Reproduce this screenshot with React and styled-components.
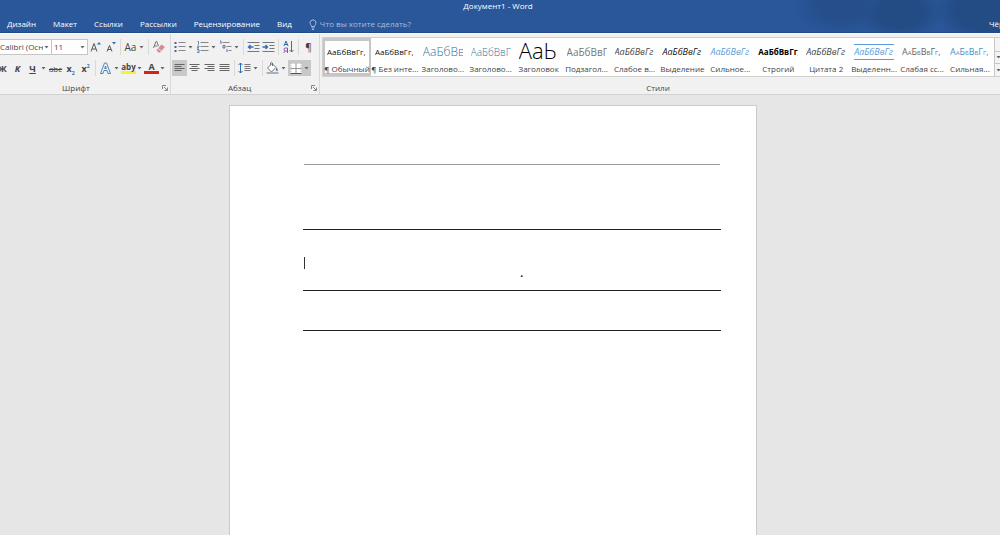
import React, { useState } from "react";
import styled, { createGlobalStyle, css } from "styled-components";

const tabs = ["Дизайн", "Макет", "Ссылки", "Рассылки", "Рецензирование", "Вид"];

const styleItems = [
    { name: "¶ Обычный", sample: "АаБбВвГг,", color: "#111", size: 8 },
    { name: "¶ Без инте...", sample: "АаБбВвГг,", color: "#111", size: 8 },
    { name: "Заголово...", sample: "АаБбВвГ", color: "#2e74a5", size: 12, light: true },
    { name: "Заголово...", sample: "АаБбВвГг", color: "#2e74a5", size: 10, light: true },
    { name: "Заголовок", sample: "АаЬ", color: "#000", size: 22, light: true },
    { name: "Подзагол...", sample: "АаБбВвГ", color: "#777", size: 10 },
    { name: "Слабое в...", sample: "АаБбВвГг", color: "#444", italic: true },
    { name: "Выделение", sample: "АаБбВвГг", color: "#111", italic: true },
    { name: "Сильное...", sample: "АаБбВвГг", color: "#5b9bd5", italic: true },
    { name: "Строгий", sample: "АаБбВвГг,", color: "#000", bold: true, size: 8 },
    { name: "Цитата 2", sample: "АаБбВвГг", color: "#444", italic: true },
    { name: "Выделенн...", sample: "АаБбВвГг", color: "#5b9bd5", italic: true, lined: true },
    { name: "Слабая сс...", sample: "АаБбВвГг,", color: "#666", caps: true },
    { name: "Сильная...", sample: "АаБбВвГг,", color: "#4a90c8", caps: true },
];

const Icon = ({ children }) => (
    <svg width="14" height="14" viewBox="0 0 14 14" fill="none" aria-hidden="true">
        {children}
    </svg>
);

const Arrow = () => (
    <ArrowSvg width="5" height="3" viewBox="0 0 5 3" aria-hidden="true">
        <path d="M0.5 0h4L2.5 2.5z" fill="#666" />
    </ArrowSvg>
);

const Lines = ({ rows }) => (
    <Icon>
        {rows.map(([x, w], i) => (
            <path key={i} d={`M${x} ${3.5 + i * 2}h${w}`} stroke="#666" />
        ))}
    </Icon>
);

const BulletIcon = () => (
    <Icon>
        {[2, 6, 10].map((y) => (
            <React.Fragment key={y}>
                <rect x="2" y={y} width="2" height="2" fill="#44699c" />
                <path d={`M6 ${y + 0.5}h7`} stroke="#888" />
            </React.Fragment>
        ))}
    </Icon>
);

const NumberIcon = () => (
    <Icon>
        <path d="M2 1.5h1v3M1.5 6h2v1l-2 1h2M1.5 9.5h2v3h-2M2 11h1" stroke="#44699c" strokeWidth="0.8" />
        <path d="M5 2.5h8M5 6.5h8M5 10.5h8" stroke="#888" />
    </Icon>
);

const MultiIcon = () => (
    <Icon>
        <path d="M1.5 1h1v3M4.5 5.5h2v2.5h-2zM8.5 9v3" stroke="#44699c" strokeWidth="0.9" />
        <path d="M4 2.5h7M8 6.5h5M10 10.5h3" stroke="#888" />
    </Icon>
);

const IndentIcon = ({ right }) => (
    <Icon>
        <path d="M1 2.5h12M8 5.5h5M8 8.5h5M1 11.5h12" stroke="#777" />
        <path d={right ? "M1 7h5M4 5l2 2l-2 2" : "M2 7h5M4 5l-2 2l2 2"} stroke="#2f6eb5" strokeWidth="1.3" />
    </Icon>
);

const SortIcon = () => (
    <Icon>
        <path d="M2.5 6l2-5l2 5M3 4.5h3" stroke="#2f6eb5" />
        <path d="M6 13V8H4q-1.5 0-1.5 1.5T4 11h2M4 11l-2 2" stroke="#8b4fa8" />
        <path d="M10 1v11M8 10l2 2l2-2" stroke="#666" />
    </Icon>
);

const EraserIcon = () => (
    <Icon>
        <path d="M2 8l2.5-6.5h.8L7 6M3 6h3" stroke="#777" />
        <path d="M5 10l5-5.5l3.5 2.5l-5 5.5H7z" fill="#dd8594" />
        <path d="M6.5 8.5l3.5 2.5" stroke="#fff" strokeWidth="0.7" />
    </Icon>
);

const GrowIcon = ({ down }) => (
    <Icon>
        <path
            d={down ? "M3.5 11.5l2.5-6l2.5 6M4.500 9.5h3" : "M2.500 11.500l3-8l3 8M3.500 9h4"}
            stroke="#555"
        />
        <path d={down ? "M8.5 2h4l-2 2.5z" : "M8.5 4.500h4l-2-2.500z"} fill="#2f6eb5" />
    </Icon>
);

const OutlineIcon = () => (
    <Icon>
        <path d="M2 12.5l4-10.5h2l4 10.5H9.5l-1-3h-3l-1 3zM6.200 7.500h1.600L7 5z" stroke="#3f78b8" strokeWidth="0.9" />
    </Icon>
);

const SpacingIcon = () => (
    <Icon>
        <path d="M3 2v10M1 4l2-2l2 2M1 10l2 2l2-2" stroke="#2f6eb5" />
        <path d="M7 3.5h6M7 5.5h6M7 7.5h6M7 9.5h6" stroke="#777" />
    </Icon>
);

const BucketIcon = () => (
    <Icon>
        <path d="M2 7l4.5-4.5l4 4L6 11zM5 4V2q1-1.5 2 0v3" stroke="#666" fill="#fff" strokeWidth="0.9" />
        <path d="M11 6.5q2 2 1 3.500q-1 .5-1.500-1z" fill="#2f6eb5" />
        <path d="M1 12h12" stroke="#999" strokeWidth="1.5" />
    </Icon>
);

const BordersIcon = () => (
    <Icon>
        <rect x="2" y="2" width="11" height="11" fill="#fff" />
        <path d="M2 12.5h11" stroke="#555" />
        <path d="M7.5 2v10M2 7.5h11" stroke="#999" />
        <path d="M2 2.5h11M2.5 2v10M12.5 2v10" stroke="#bbb" strokeDasharray="1 1" />
    </Icon>
);

const BulbIcon = () => (
    <svg width="8" height="11" viewBox="0 0 8 11" fill="none" aria-hidden="true">
        <path
            d="M2.500 7.500Q2.500 6.500 1.500 5.500Q.5 3.500 1.500 2Q4-.5 6.500 2Q7.500 3.500 6.500 5.500Q5.500 6.500 5.500 7.500zM2.500 9h3M3 10.500h2"
            stroke="#b5c7e3"
            strokeWidth="0.9"
        />
    </svg>
);

const Launcher = () => (
    <LauncherButton aria-label="Параметры">
        <svg width="6" height="6" viewBox="0 0 6 6" fill="none" aria-hidden="true">
            <path d="M.5 4V.5H4M2 2l3 3M5.500 2.500v3h-3" stroke="#777" strokeWidth="0.9" />
        </svg>
    </LauncherButton>
);

export default function App() {
    const [selected, setSelected] = useState(0);

    return (
        <Window>
            <GlobalStyle />
            <Header>
                <Title>Документ1 - Word</Title>
                <TabBar>
                    {tabs.map((tab) => (
                        <Tab key={tab}>{tab}</Tab>
                    ))}
                    <Tell>
                        <BulbIcon />
                        <input placeholder="Что вы хотите сделать?" aria-label="Что вы хотите сделать?" />
                    </Tell>
                    <Account>Чёрный</Account>
                </TabBar>
            </Header>

            <Ribbon>
                <Group $width={171}>
                    <Tools>
                        <Row>
                            <Picker $width={52}>
                                <select aria-label="Шрифт">
                                    <option>Calibri (Основной текст)</option>
                                </select>
                                <Arrow />
                            </Picker>
                            <Picker $width={36} $pad={2}>
                                <select aria-label="Размер шрифта">
                                    <option>11</option>
                                </select>
                                <Arrow />
                            </Picker>
                            <Tool aria-label="Увеличить"><GrowIcon /></Tool>
                            <Tool aria-label="Уменьшить"><GrowIcon down /></Tool>
                            <Separator />
                            <Tool $split aria-label="Регистр"><Glyph>Aa</Glyph><Arrow /></Tool>
                            <Separator />
                            <Tool aria-label="Очистить формат"><EraserIcon /></Tool>
                        </Row>
                        <Row $cut>
                            <Tool><Glyph $bold>Ж</Glyph></Tool>
                            <Tool><Glyph $bold $italic>К</Glyph></Tool>
                            <Tool $split><Glyph $bold $line="underline">Ч</Glyph><Arrow /></Tool>
                            <Tool><Glyph $small $line="line-through">abc</Glyph></Tool>
                            <Tool><Glyph $bold>x<sub>2</sub></Glyph></Tool>
                            <Tool><Glyph $bold>x<sup>2</sup></Glyph></Tool>
                            <Separator />
                            <Tool $split aria-label="Эффекты"><OutlineIcon /><Arrow /></Tool>
                            <Tool $split><Glyph $small $bold $mark="#f7f03a">aby</Glyph><Arrow /></Tool>
                            <Tool $split><Glyph $bold $mark="#d8201c">A</Glyph><Arrow /></Tool>
                        </Row>
                    </Tools>
                    <Caption>Шрифт<Launcher /></Caption>
                </Group>

                <Group $width={149}>
                    <Tools>
                        <Row>
                            <Tool $split aria-label="Маркеры"><BulletIcon /><Arrow /></Tool>
                            <Tool $split aria-label="Нумерация"><NumberIcon /><Arrow /></Tool>
                            <Tool $split aria-label="Многоуровневый список"><MultiIcon /><Arrow /></Tool>
                            <Separator />
                            <Tool aria-label="Уменьшить отступ"><IndentIcon /></Tool>
                            <Tool aria-label="Увеличить отступ"><IndentIcon right /></Tool>
                            <Separator />
                            <Tool aria-label="Сортировка"><SortIcon /></Tool>
                            <Separator />
                            <Tool><Glyph>¶</Glyph></Tool>
                        </Row>
                        <Row>
                            <Tool $on aria-label="По левому краю"><Lines rows={[[2, 10], [2, 7], [2, 10], [2, 7]]} /></Tool>
                            <Tool aria-label="По центру"><Lines rows={[[2, 10], [4, 6], [2, 10], [4, 6]]} /></Tool>
                            <Tool aria-label="По правому краю"><Lines rows={[[2, 10], [5, 7], [2, 10], [5, 7]]} /></Tool>
                            <Tool aria-label="По ширине"><Lines rows={[[2, 10], [2, 10], [2, 10], [2, 10]]} /></Tool>
                            <Separator />
                            <Tool $split aria-label="Интервал"><SpacingIcon /><Arrow /></Tool>
                            <Separator />
                            <Tool $split aria-label="Заливка"><BucketIcon /><Arrow /></Tool>
                            <Tool $split $on aria-label="Границы"><BordersIcon /><Arrow /></Tool>
                        </Row>
                    </Tools>
                    <Caption>Абзац<Launcher /></Caption>
                </Group>

                <StylesGroup>
                    <Gallery>
                        {styleItems.map((item, index) => (
                            <StyleCard
                                key={index}
                                $selected={index === selected}
                                onClick={() => setSelected(index)}
                            >
                                <Sample
                                    $color={item.color}
                                    $size={item.size}
                                    $light={item.light}
                                    $bold={item.bold}
                                    $italic={item.italic}
                                    $caps={item.caps}
                                    $lined={item.lined}
                                >
                                    {item.sample}
                                </Sample>
                                <StyleName>{item.name}</StyleName>
                            </StyleCard>
                        ))}
                        <Scroller>
                            <button aria-label="Вверх" />
                            <button aria-label="Вниз"><Arrow /></button>
                            <button aria-label="Ещё"><Arrow /></button>
                        </Scroller>
                    </Gallery>
                    <Caption>Стили</Caption>
                </StylesGroup>
            </Ribbon>

            <Workspace>
                <Page>
                    <Rule $thin />
                    <Rule $space={64} />
                    <Paragraph>
                        <Caret />
                        <p>.</p>
                    </Paragraph>
                    <Rule />
                    <Rule $space={39} />
                </Page>
            </Workspace>
        </Window>
    );
}

const GlobalStyle = createGlobalStyle`
    * {
        box-sizing: border-box;
    }
    body {
        margin: 0;
        overflow: hidden;
        background: #e6e6e6;
        font-family: "Open Sans", "Noto Sans", sans-serif;
        font-size: 8px;
        line-height: 12px;
        color: #444;
    }
    button, select, input {
        font: inherit;
        color: inherit;
        margin: 0;
        padding: 0;
        border: 0;
        background: none;
    }
`;

const Window = styled.div`
    display: flex;
    flex-direction: column;
    min-height: 100vh;
`;

const Header = styled.header`
    height: 33px;
    color: #fff;
    border-bottom: 1px solid #1f4a86;
    background:
        radial-gradient(ellipse 48px 30px at 84% 20%, #254e8a 40%, transparent),
        radial-gradient(ellipse 44px 28px at 90% 40%, #234b84 50%, transparent),
        radial-gradient(ellipse 56px 36px at 99% 30%, #234b84 60%, transparent),
        #2a579a;
`;

const Title = styled.div`
    text-align: center;
    padding-right: 4px;
`;

const TabBar = styled.nav`
    display: flex;
    align-items: center;
    gap: 17px;
    height: 24px;
    padding-left: 7px;
    white-space: nowrap;
`;

const Tab = styled.button`
    flex: none;
`;

const Tell = styled.label`
    display: flex;
    align-items: center;
    flex: 1;
    gap: 3px;
    input {
        width: 120px;
        outline: none;
    }
    input::placeholder {
        color: #a9bddd;
        opacity: 1;
    }
`;

const Account = styled.button`
    flex: none;
    width: 11px;
    overflow: hidden;
    text-align: left;
`;

const Ribbon = styled.div`
    display: flex;
    height: 62px;
    background: #f1f1f1;
    border-top: 1px solid #fafafa;
    border-bottom: 1px solid #d2d2d2;
`;

const Group = styled.section`
    display: flex;
    flex-direction: column;
    justify-content: space-between;
    flex: none;
    width: ${({ $width }) => $width}px;
    border-right: 1px solid #d9d9d9;
`;

const StylesGroup = styled(Group)`
    flex: 1;
    min-width: 0;
    border: 0;
    padding-left: 2px;
    > :last-child {
        padding-right: 6px;
    }
`;

const Tools = styled.div`
    display: grid;
    gap: 5px;
    padding-top: 5px;
`;

const Row = styled.div`
    display: flex;
    align-items: center;
    height: 16px;
    margin-left: ${({ $cut }) => ($cut ? "-5px" : "0")};
    ${Group} + ${Group} & {
        padding-left: 1px;
    }
`;

const Tool = styled.button`
    display: flex;
    align-items: center;
    flex: none;
    width: ${({ $split }) => ($split ? 23 : 15)}px;
    height: 16px;
    background: ${({ $on }) => ($on ? "#c8c8c8" : "none")};
    > :first-child {
        flex: none;
        width: 15px;
    }
    &:hover {
        background: #d5d5d5;
    }
`;

const ArrowSvg = styled.svg`
    flex: none;
    margin-left: 1px;
`;

const Glyph = styled.span`
    font-size: ${({ $small, $bold }) => ($small ? 8 : $bold ? 9 : 10)}px;
    line-height: 11px;
    font-weight: ${({ $bold }) => ($bold ? 700 : 400)};
    font-style: ${({ $italic }) => ($italic ? "italic" : "normal")};
    text-decoration: ${({ $line }) => $line || "none"};
    border-bottom: ${({ $mark }) => ($mark ? `3px solid ${$mark}` : "0")};
    ${({ $mark }) => $mark && css`line-height: 9px;`}
    sub, sup {
        font-size: 5px;
        line-height: 0;
        color: #2f6eb5;
    }
`;

const Separator = styled.span`
    flex: none;
    width: 1px;
    height: 16px;
    margin: 0 2px;
    background: #d9d9d9;
`;

const Picker = styled.span`
    display: flex;
    align-items: center;
    flex: none;
    width: ${({ $width }) => $width}px;
    height: 16px;
    padding: 0 2px 0 ${({ $pad = 0 }) => $pad}px;
    background: #fff;
    border: 1px solid #c6c6c6;
    border-left-width: 0;
    select {
        flex: 1;
        min-width: 0;
        appearance: none;
        overflow: hidden;
        text-overflow: clip;
    }
`;

const Caption = styled.div`
    display: flex;
    align-items: center;
    justify-content: center;
    height: 12px;
`;

const LauncherButton = styled.button`
    display: flex;
    margin-left: auto;
    padding-right: 2px;
    ${Caption}:has(&) {
        padding-left: 62px;
    }
    ${Group} + ${Group} ${Caption}:has(&) {
        padding-left: 57px;
    }
`;

const Gallery = styled.div`
    display: flex;
    height: 40px;
    margin-top: 3px;
    background: #fff;
    border: 1px solid #cfcfcf;
    border-right: 0;
`;

const StyleCard = styled.button`
    display: flex;
    flex-direction: column;
    flex: 1;
    min-width: 0;
    padding: 0 2px;
    white-space: nowrap;
    border: 3px solid ${({ $selected }) => ($selected ? "#c6c6c6" : "transparent")};
    border-left-width: 2px;
    border-right-width: 2px;
`;

const Sample = styled.span`
    display: flex;
    align-items: center;
    flex: none;
    width: 100%;
    height: 22px;
    overflow: hidden;
    color: ${({ $color }) => $color};
    font-size: ${({ $size = 9 }) => $size}px;
    font-weight: ${({ $bold, $light }) => ($bold ? 700 : $light ? 300 : 400)};
    font-style: ${({ $italic }) => ($italic ? "italic" : "normal")};
    font-variant: ${({ $caps }) => ($caps ? "small-caps" : "normal")};
    padding-bottom: ${({ $size }) => ($size > 20 ? 5 : 0)}px;
    ${({ $lined }) => $lined && css`
        height: 16px;
        margin: 3px 0;
        border-top: 1px solid #5b9bd5;
        border-bottom: 1px solid #5b9bd5;
    `}
`;

const StyleName = styled.span`
    align-self: center;
`;

const Scroller = styled.div`
    display: grid;
    grid-template-rows: repeat(3, 1fr);
    width: 6px;
    overflow: hidden;
    background: #f4f4f4;
    border-left: 1px solid #c6c6c6;
    button {
        display: flex;
        align-items: center;
    }
    button + button {
        border-top: 1px solid #c6c6c6;
    }
`;

const Workspace = styled.main`
    display: grid;
    grid-template-columns: 229fr 528fr 243fr;
    flex: 1;
    padding-top: 10px;
`;

const Page = styled.article`
    grid-column: 2;
    padding: 58px 35px 0 73px;
    background: #fff;
    border: 1px solid #cbcbcb;
    border-bottom: 0;
    color: #000;
`;

const Rule = styled.hr`
    height: 1px;
    margin: ${({ $space = 0 }) => $space}px 0 0;
    border: 0;
    background: ${({ $thin }) => ($thin ? "#999" : "#222")};
    ${({ $thin }) => $thin && css`margin: 0 1px;`}
`;

const Paragraph = styled.div`
    height: 60px;
    padding: 27px 1px 0;
    p {
        margin: 0;
        padding-left: 52%;
        line-height: 8px;
        font-size: 10px;
        font-weight: 700;
    }
`;

const Caret = styled.div`
    width: 1px;
    height: 12px;
    background: #333;
`;
